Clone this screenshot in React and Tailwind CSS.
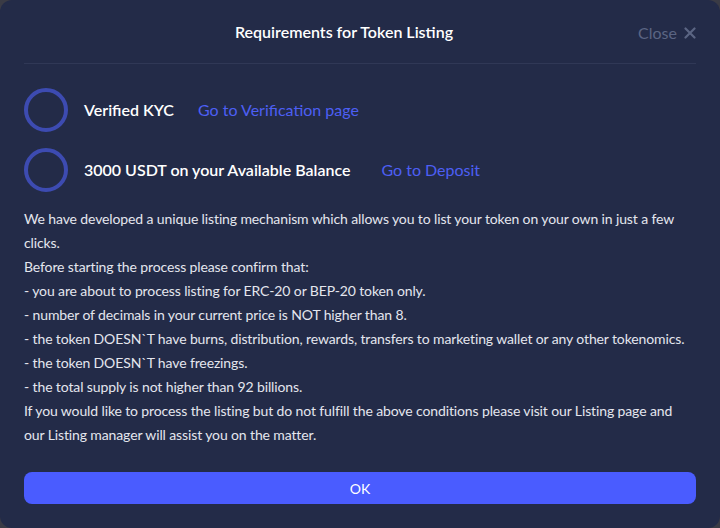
export default function App() {
  const font = { fontFamily: "Lato, 'Noto Sans', sans-serif" };
  return (
    <div className="w-[720px] h-[528px] bg-[#3a3b45]" style={font}>
      <div className="w-full h-full rounded-[12px] bg-[#232b48] flex flex-col px-6">
        <div className="relative h-[64px] flex items-center justify-center border-b border-[#303856]">
          <div className="mr-[32px] text-[16px] font-semibold text-white">Requirements for Token Listing</div>
          <div className="absolute right-0 top-[21px] flex items-center gap-[7px] text-[16px] text-[#5b6583]">
            <span>Close</span>
            <svg width="12" height="12" viewBox="0 0 12 12" fill="none" stroke="currentColor" strokeWidth="2.2" strokeLinecap="round"><path d="M1.5 1.5l9 9M10.5 1.5l-9 9"/></svg>
          </div>
        </div>
        <div className="flex flex-col gap-4 pt-6">
          <div className="flex items-center">
            <div className="w-[44px] h-[44px] rounded-full border-4 border-[#3d4bb1]"></div>
            <span className="ml-4 text-[16px] font-semibold text-white">Verified KYC</span>
            <span className="ml-6 text-[16px] text-[#4d5ff4]">Go to Verification page</span>
          </div>
          <div className="flex items-center">
            <div className="w-[44px] h-[44px] rounded-full border-4 border-[#3d4bb1]"></div>
            <span className="ml-4 text-[16px] font-semibold text-white">3000 USDT on your Available Balance</span>
            <span className="ml-[31px] text-[16px] text-[#4d5ff4]">Go to Deposit</span>
          </div>
        </div>
        <div className="mt-[15px] pr-[8px] text-[14px] leading-[24px] tracking-[-0.12px] text-[#e4e6ee]">
          <p>We have developed a unique listing mechanism which allows you to list your token on your own in just a few clicks.</p>
          <p>Before starting the process please confirm that:</p>
          <p>- you are about to process listing for ERC-20 or BEP-20 token only.</p>
          <p>- number of decimals in your current price is NOT higher than 8.</p>
          <p>- the token DOESN`T have burns, distribution, rewards, transfers to marketing wallet or any other tokenomics.</p>
          <p>- the token DOESN`T have freezings.</p>
          <p>- the total supply is not higher than 92 billions.</p>
          <p>If you would like to process the listing but do not fulfill the above conditions please visit our Listing page and our Listing manager will assist you on the matter.</p>
        </div>
        <button className="mt-[25px] h-[32px] w-full rounded-[8px] bg-[#4a5cff] text-white text-[14px]">OK</button>
      </div>
    </div>
  );
}
